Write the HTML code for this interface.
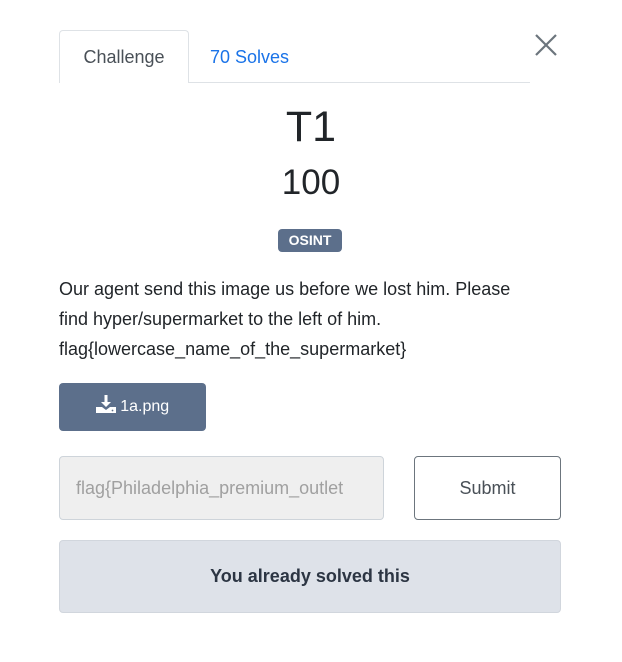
<!DOCTYPE html>
<html><head><style>
body{margin:0;width:622px;height:662px;background:#fff;font-family:"Liberation Sans",sans-serif;position:relative;overflow:hidden;color:#212529}
.a{position:absolute}
</style></head><body>
<div class="a" style="left:59px;top:30px;width:128px;height:52px;border:1px solid #dee2e6;border-bottom:none;border-radius:4px 4px 0 0;background:#fff;z-index:2"></div>
<div class="a" style="left:59px;top:82px;width:471px;height:1px;background:#dee2e6"></div>
<div class="a" style="left:59px;top:47px;width:130px;text-align:center;font-size:18px;color:#495057;z-index:3">Challenge</div>
<div class="a" style="left:210px;top:47px;font-size:18px;color:#1a73e8">70 Solves</div>
<svg class="a" style="left:535px;top:34px" width="22" height="22" viewBox="0 0 22 22"><path d="M1 1L21 21M21 1L1 21" stroke="#6c757d" stroke-width="2.2"/></svg>
<div class="a" style="left:0;width:622px;top:103px;text-align:center;font-size:43px;color:#212529">T1</div>
<div class="a" style="left:0;width:622px;top:163px;text-align:center;font-size:35px;color:#212529">100</div>
<div class="a" style="left:278px;top:229px;width:64px;height:23px;background:#5c6f8b;border-radius:4px;color:#fff;font-weight:bold;font-size:14px;line-height:23px;text-align:center">OSINT</div>
<div class="a" style="left:59px;top:274px;width:480px;font-size:18px;line-height:30px;color:#212529">Our agent send this image us before we lost him. Please find hyper/supermarket to the left of him.<br>flag{lowercase_name_of_the_supermarket}</div>
<div class="a" style="left:59px;top:383px;width:147px;height:48px;background:#5c6f8b;border-radius:4px;color:#fff;font-size:16px;line-height:48px;text-align:center"><svg width="20" height="18" viewBox="0 0 20 18" style="vertical-align:-2px"><path d="M8.5 0h3v7h3.5l-5 5-5-5h3.5z" fill="#fff"/><path d="M0 12h6l4 3 4-3h6v6H0z" fill="#fff"/><circle cx="16.5" cy="15.5" r="0.9" fill="#5c6f8b"/></svg> 1a.png</div>
<div class="a" style="left:59px;top:456px;background:#efefef;border:1px solid #ced4da;border-radius:4px;font-size:18px;color:#a0a0a0;line-height:62px;padding-left:16px;box-sizing:border-box;width:325px;height:64px;white-space:nowrap;overflow:hidden">flag{Philadelphia_premium_outlet</div>
<div class="a" style="left:414px;top:456px;width:147px;height:64px;border:1px solid #6c757d;border-radius:4px;box-sizing:border-box;text-align:center;line-height:62px;font-size:18px;color:#495057">Submit</div>
<div class="a" style="left:59px;top:540px;width:502px;height:73px;background:#dee2e9;border:1px solid #d1d6dd;border-radius:4px;box-sizing:border-box;text-align:center;line-height:71px;font-size:18px;color:#2c3543;font-weight:bold">You already solved this</div>
</body></html>
